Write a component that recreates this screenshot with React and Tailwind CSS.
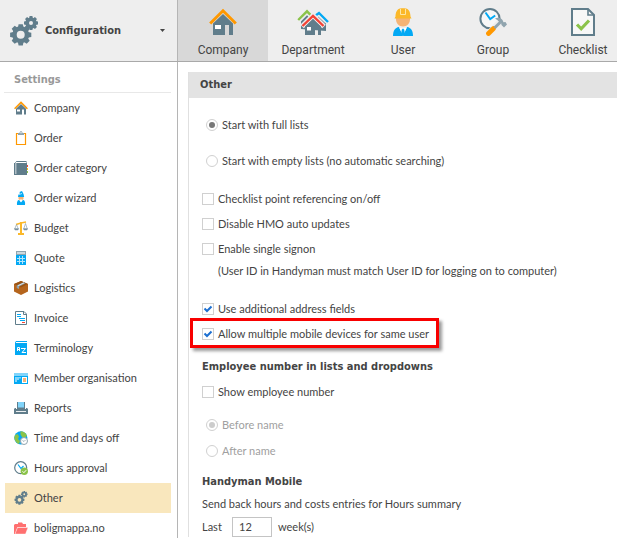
import React, { useState } from "react";

const Gear = ({ cx, cy, r, hole }) => (
  <g transform={`translate(${cx} ${cy})`}>
    {[0, 45, 90, 135, 180, 225, 270, 315].map((angle) => (
      <path
        key={angle}
        transform={`rotate(${angle})`}
        d={`M${-r * 0.28} ${-r * 0.6} L${-r * 0.2} ${-r} H${r * 0.2} L${r * 0.28} ${-r * 0.6} Z`}
        fill="#607d8b"
      />
    ))}
    <circle r={(r * 0.8 + hole) / 2} fill="none" stroke="#607d8b" strokeWidth={r * 0.8 - hole} />
  </g>
);

const GearsIcon = ({ className }) => (
  <svg viewBox="0 0 28 30" className={className} aria-hidden="true">
    <Gear cx={10.7} cy={18.8} r={10.6} hole={4} />
    <Gear cx={21} cy={7} r={7} hole={2} />
  </svg>
);

const HouseIcon = ({ className }) => (
  <svg viewBox="0 0 28 28" className={className} aria-hidden="true">
    <path d="M4 27V15.5L14 6l10 9.5V27h-4V17h-4v10z" fill="#607d8b" />
    <path d="M6 17h6v4H6z" fill="#fff" />
    <path d="M1.2 15.5 14 2.8l12.8 12.7" fill="none" stroke="#ff9800" strokeWidth="3" />
  </svg>
);

const DepartmentIcon = ({ className }) => (
  <svg viewBox="0 0 32 28" className={className} aria-hidden="true">
    <path d="M4 21v-9l6-6 6 5 6-3 7 6v9z" fill="#607d8b" />
    <path d="m1.500 13 8.500-8.700 5 5" fill="none" stroke="#eee" strokeWidth="4" />
    <path d="m16 9 5.500-3L30 14" fill="none" stroke="#eee" strokeWidth="4" />
    <path d="M1.200 12 10 3.300l4.500 4.500" fill="none" stroke="#8bc34a" strokeWidth="2.400" />
    <path d="m17.500 8.300 4.500-3.300 9 9" fill="none" stroke="#03a9f4" strokeWidth="2.400" />
    <path d="M5 18.500 16 7.500l11 11" fill="none" stroke="#eee" strokeWidth="5" />
    <path d="M8 27v-8.500l8-7.500 8 7.500V27h-3v-8h-3v8z" fill="#607d8b" />
    <path d="M10 19h4v3.500h-4z" fill="#fff" />
    <path d="M5.500 18 16 7.800 26.500 18" fill="none" stroke="#f44336" strokeWidth="2.400" />
  </svg>
);

const UserIcon = ({ className }) => (
  <svg viewBox="0 0 20 28" className={className} aria-hidden="true">
    <path d="M3 10h14c.5 5-3 8.500-7 8.500S2.500 15 3 10z" fill="#f5b375" />
    <path d="M2.500 8.500C2.500 4 4.500 1 7 .5 9 0 11 0 13 .5c2.500.5 4.500 3.500 4.500 8l1 2h-17z" fill="#fbb829" />
    <path d="M7.500 1v5.500h5V1" fill="none" stroke="#fff3c4" strokeWidth=".8" />
    <path d="M0 28c0-5 2-8.500 6-9l4 9zM20 28c0-5-2-8.500-6-9l-4 9z" fill="#03a9f4" />
    <path d="M6 19.300 10 27l4-7.700c-2 1.300-6 1.300-8 0z" fill="#fff" />
    <path d="m8.800 21.500 1.200-1 1.200 1L12 26l-2 2-2-2z" fill="#03a9f4" />
  </svg>
);

const GroupIcon = ({ className }) => (
  <svg viewBox="0 0 28 28" className={className} aria-hidden="true">
    <circle cx="11" cy="10.700" r="9.600" fill="#f7f7f7" stroke="#607d8b" strokeWidth="2" />
    <path d="m6.500 4.500 4.700 6.500 5-3.500" fill="none" stroke="#03a9f4" strokeWidth="2" />
    <path d="M10 26 21 14.500" fill="none" stroke="#eee" strokeWidth="7" />
    <path d="m9.500 25.500 5-5" fill="none" stroke="#ff9800" strokeWidth="4.800" strokeLinecap="round" />
    <path d="m15.500 20 6-6" stroke="#90a4ae" strokeWidth="3" />
    <path d="M16 10.500c3-1.500 5.500-.7 7.500 1.500l1 2.200 2-.2 1.500 2.500-3 3-2.500-2.500-.3-1.700L19 12.500z" fill="#90a4ae" />
  </svg>
);

const ChecklistIcon = ({ className }) => (
  <svg viewBox="0 0 24 28" className={className} aria-hidden="true">
    <path d="M1 1h16l6 6v20H1z" fill="#f7f7f7" stroke="#607d8b" strokeWidth="2" />
    <path d="M17 1v6h6" fill="none" stroke="#607d8b" strokeWidth="1.600" />
    <path d="m6 16.500 4.200 4.300L18 12.500" fill="none" stroke="#8bc34a" strokeWidth="3.200" />
  </svg>
);

const icon = "size-[14px] shrink-0";

const OrderIcon = () => (
  <svg viewBox="0 0 14 14" className={icon} aria-hidden="true">
    <path d="M2.500 2.500h9v11h-9z" fill="#fff" stroke="#ff9800" strokeWidth="1.200" />
    <path d="M4 4V2h1.500c0-2.400 3-2.400 3 0H10v2z" fill="#90a4ae" />
    <path d="M6.300 1.300h1.400v1H6.300z" fill="#fff" />
  </svg>
);

const BookIcon = () => (
  <svg viewBox="0 0 14 14" className={icon} aria-hidden="true">
    <path d="M1 2 2.500 0H12.500v2z" fill="#607d8b" />
    <path d="M2 1h10v1H2z" fill="#fff" />
    <path d="M0 2h13v12H0z" fill="#607d8b" />
    <path d="M1 2h1.500v11H1z" fill="#b0bec5" />
    <path d="M13 4h1v2h-1z" fill="#f44336" />
    <path d="M13 7h1v2h-1z" fill="#ffc107" />
    <path d="M13 10h1v2h-1z" fill="#8bc34a" />
  </svg>
);

const WizardIcon = () => (
  <svg viewBox="0 0 14 14" className={icon} aria-hidden="true">
    <path d="M4 6c0-2 1-3.500 2-3.500L5.500 1 8 0l1.500 3 .7 3z" fill="#03a9f4" />
    <path d="M5 3.500 8 2.500" stroke="#fff" strokeWidth=".7" />
    <path d="M4.500 6h5v1.500a2.500 2.500 0 0 1-5 0z" fill="#f5b375" />
    <path d="M3 14c-.3-3 .5-5 2-5l2 2 2-2c1.500 0 2.500 2 2 5z" fill="#03a9f4" />
    <path d="M5.300 8.500h3.400L7 11.500z" fill="#fff" />
  </svg>
);

const ScalesIcon = () => (
  <svg viewBox="0 0 14 14" className={icon} aria-hidden="true">
    <path d="M2 3.500 7 2l5-1" fill="none" stroke="#fbb829" strokeWidth="1.600" />
    <path d="M6 1h2v11H6z" fill="#fbb829" />
    <path d="M4 12h6v2H4z" fill="#fbb829" />
    <path d="M2.500 3.500.7 8h3.600zM11.500 2.500 9.700 8h3.600z" fill="none" stroke="#90a4ae" strokeWidth=".7" />
    <path d="M0 7.500h5L4 9.300H1zM9 7.500h5l-1 1.800h-3z" fill="#78909c" />
  </svg>
);

const CalculatorIcon = () => (
  <svg viewBox="0 0 14 14" className={icon} aria-hidden="true">
    <path d="M2 0h10v14H2z" fill="#03a9f4" />
    <path d="M2 0h10v4H2z" fill="#90a4ae" />
    <path d="M3 1h8v2H3z" fill="#cfd8dc" />
    <path d="M3 7.500h8M3 10.500h8M5.500 5v8M8.500 5v8" stroke="#b3e5fc" strokeWidth="1" />
  </svg>
);

const BoxIcon = () => (
  <svg viewBox="0 0 14 14" className={icon} aria-hidden="true">
    <path d="M7 0 14 3v7.500L7 14l-7-3.500V3z" fill="#b5651d" />
    <path d="M0 3 7 0l7 3-7 3.500z" fill="#9b5414" />
    <path d="M2.700 7V4.500L9.500 1.300l2 .9L5 5.500V8" fill="#90a4ae" />
    <path d="m4 4.700 6-2.800" stroke="#eceff1" strokeWidth=".8" />
  </svg>
);

const InvoiceIcon = () => (
  <svg viewBox="0 0 14 14" className={icon} aria-hidden="true">
    <path d="M1.500.5H10L12.500 3v10.500h-11z" fill="#fff" stroke="#607d8b" />
    <path d="M9.500.5v3h3" fill="none" stroke="#607d8b" />
    <path d="M3 3.500h4M3 5.500h4M5 7.500h6M6 9.500h5" stroke="#03a9f4" />
    <path d="M8 11.500h3" stroke="#f44336" />
  </svg>
);

const TerminologyIcon = () => (
  <svg viewBox="0 0 14 14" className={icon} aria-hidden="true">
    <path d="M1 1.500 2 0h11v14H1z" fill="#03a9f4" />
    <path d="M2 1h11v1H2z" fill="#fff" />
    <path d="M3.500 10V6.500h2V10M3.500 8.500h2M7 7.500h4.500L8 11.500h4" fill="none" stroke="#fff" strokeWidth="1" />
  </svg>
);

const MemberIcon = () => (
  <svg viewBox="0 0 14 14" className={icon} aria-hidden="true">
    <path d="M0 2h14v11H0z" fill="#03a9f4" />
    <path d="M0 2h14v3H0z" fill="#81d4fa" />
    <path d="M1 11V6h6v1.500H5V9H3v2z" fill="#81d4fa" />
    <path d="M8 6h5v6H8z" fill="#fff" />
    <path d="M9 7h3v4H9z" fill="#f5b375" />
  </svg>
);

const PrinterIcon = () => (
  <svg viewBox="0 0 14 14" className={icon} aria-hidden="true">
    <path d="M3 1h8v7H3z" fill="#607d8b" />
    <path d="M4 1h6v5.500H4z" fill="#81d4fa" />
    <path d="M1 7h1v1h10V7h1l1 1v5H0V8z" fill="#607d8b" />
    <path d="M2 10h10v1H2z" fill="#eceff1" />
  </svg>
);

const GlobeIcon = () => (
  <svg viewBox="0 0 14 14" className={icon} aria-hidden="true">
    <circle cx="6.800" cy="6.800" r="6.600" fill="#03a9f4" />
    <path d="M6.500.3c2.500 0 5 1 6.500 4.200L11 7 8 6 6.500 3.500zM1 4l2.500-1L5 5.500 4 8l2 2-1 3C2 12 .3 9 .3 6.500z" fill="#8bc34a" />
    <circle cx="10" cy="10" r="3.500" fill="#fff" stroke="#90a4ae" />
    <path d="M8.500 9.500 10 10.500 11.500 9" fill="none" stroke="#90a4ae" strokeWidth=".8" />
  </svg>
);

const HoursIcon = () => (
  <svg viewBox="0 0 14 14" className={icon} aria-hidden="true">
    <circle cx="6.700" cy="6.700" r="6" fill="#fff" stroke="#607d8b" strokeWidth="1.200" />
    <path d="m4 3.500 3 4L9.500 5" fill="none" stroke="#03a9f4" strokeWidth="1.200" />
    <circle cx="10.300" cy="10.300" r="3.700" fill="#8bc34a" />
    <path d="m8.500 10.300 1.400 1.400 2.300-2.500" fill="none" stroke="#fff" />
  </svg>
);

const FolderIcon = () => (
  <svg viewBox="0 0 14 14" className={icon} aria-hidden="true">
    <path d="M0 13V4l1-1h3V1.500h4L9 3h3v3H3.500L1 13z" fill="#ff7070" />
    <path d="M3.500 6.500H14L11.500 13H1z" fill="#ff7070" stroke="#fff" strokeWidth=".4" />
  </svg>
);

const menuItems = [
  { label: "Company", icon: <HouseIcon className={icon} /> },
  { label: "Order", icon: <OrderIcon /> },
  { label: "Order category", icon: <BookIcon /> },
  { label: "Order wizard", icon: <WizardIcon /> },
  { label: "Budget", icon: <ScalesIcon /> },
  { label: "Quote", icon: <CalculatorIcon /> },
  { label: "Logistics", icon: <BoxIcon /> },
  { label: "Invoice", icon: <InvoiceIcon /> },
  { label: "Terminology", icon: <TerminologyIcon /> },
  { label: "Member organisation", icon: <MemberIcon /> },
  { label: "Reports", icon: <PrinterIcon /> },
  { label: "Time and days off", icon: <GlobeIcon /> },
  { label: "Hours approval", icon: <HoursIcon /> },
  { label: "Other", icon: <GearsIcon className={icon} /> },
  { label: "boligmappa.no", icon: <FolderIcon /> },
];

const tabs = [
  { label: "Company", icon: <HouseIcon className="h-7 w-7" /> },
  { label: "Department", icon: <DepartmentIcon className="h-7 w-8" /> },
  { label: "User", icon: <UserIcon className="h-7 w-5" /> },
  { label: "Group", icon: <GroupIcon className="h-7 w-7" /> },
  { label: "Checklist", icon: <ChecklistIcon className="h-7 w-6" /> },
];

const heading = "font-['DejaVu_Sans_Condensed','Noto_Sans',sans-serif] font-bold";

const Check = ({ label, defaultChecked, highlight }) => (
  <label className="relative flex h-5 w-fit items-center gap-1">
    <span className="grid place-items-center">
      <input
        type="checkbox"
        defaultChecked={defaultChecked}
        className="peer col-start-1 row-start-1 size-3 appearance-none border border-[#d0d0d0] bg-white"
      />
      <svg viewBox="0 0 12 12" className="pointer-events-none invisible col-start-1 row-start-1 size-3 peer-checked:visible" aria-hidden="true">
        <path d="m2.500 5.500 2.500 2.500 4.500-4.500" fill="none" stroke="#1c6fd0" strokeWidth="2" />
      </svg>
    </span>
    {label}
    {highlight && (
      <span className="pointer-events-none absolute -top-1.5 -right-2.5 -bottom-1 -left-3 border-3 border-[#f80000] shadow-[3px_3px_3px_rgba(0,0,0,0.4)]" />
    )}
  </label>
);

const Radio = ({ label, name, defaultChecked, disabled }) => (
  <label className={`ml-1 flex h-5 w-fit items-center gap-1 ${disabled ? "text-[#a0a0a0]" : ""}`}>
    <span className="grid place-items-center">
      <input
        type="radio"
        name={name}
        defaultChecked={defaultChecked}
        disabled={disabled}
        className="peer col-start-1 row-start-1 size-3 appearance-none rounded-full border border-[#d0d0d0] bg-white"
      />
      <span className="pointer-events-none invisible col-start-1 row-start-1 size-1.5 rounded-full bg-[#777] peer-checked:visible peer-disabled:bg-[#ccc]" />
    </span>
    {label}
  </label>
);

const App = () => {
  const [activeTab, setActiveTab] = useState("Company");
  const [activeItem, setActiveItem] = useState("Other");

  return (
    <div className="flex h-screen flex-col overflow-hidden bg-white font-[Lato,sans-serif] text-[11px] leading-5 text-[#444]">

      {/* TOP BAR */}
      <header className="flex shrink-0 border-b border-[#a9a9a9] bg-[#eee]">
        <button className={`flex w-[178px] shrink-0 items-center gap-[7px] border-r border-[#b5b5b5] pr-3 pl-2.5 ${heading}`}>
          <GearsIcon className="h-[30px] w-7" />
          <span className="flex-1 text-left">Configuration</span>
          <svg viewBox="0 0 5 3" className="h-[3px] w-[5px]" aria-hidden="true">
            <path d="M0 0h5L2.500 3z" fill="#444" />
          </svg>
        </button>
        <nav className="flex min-w-0 flex-1 overflow-hidden">
          {tabs.map((tab) => (
            <button
              key={tab.label}
              onClick={() => setActiveTab(tab.label)}
              className={`flex w-[90px] shrink-0 flex-col items-center gap-1 pt-2 pb-px font-[Roboto,sans-serif] text-xs leading-5 ${
                activeTab === tab.label ? "bg-[#d8d8d8]" : ""
              }`}
            >
              {tab.icon}
              {tab.label}
            </button>
          ))}
        </nav>
      </header>

      <div className="flex min-h-0 flex-1">

        {/* SETTINGS MENU */}
        <aside className="w-[178px] shrink-0 overflow-hidden border-r border-[#b5b5b5] pt-2 pr-1.5 pl-1">
          <h2 className={`border-b border-[#e8e8e8] pb-0.5 pl-2.5 text-[#999] ${heading}`}>Settings</h2>
          <ul className="pl-px">
            {menuItems.map((item) => (
              <li key={item.label}>
                <button
                  onClick={() => setActiveItem(item.label)}
                  className={`flex h-[30px] w-full items-center gap-1.5 pl-[9px] text-left ${
                    activeItem === item.label ? "bg-[#f9e7bd]" : ""
                  }`}
                >
                  {item.icon}
                  {item.label}
                </button>
              </li>
            ))}
          </ul>
        </aside>

        {/* OPTIONS */}
        <main className="min-w-0 flex-1 overflow-hidden pt-2.5 pl-2.5">
          <section className="border-l border-[#e0e0e0]">
            <h1 className={`bg-[#e3e3e3] py-[3px] pl-[11px] ${heading}`}>Other</h1>
            <form className="pt-[17px] pl-[13px]">
              <div className="flex flex-col gap-4">
                <Radio name="start" label="Start with full lists" defaultChecked />
                <Radio name="start" label="Start with empty lists (no automatic searching)" />
              </div>

              <div className="mt-[18px] flex flex-col gap-[5px]">
                <Check label="Checklist point referencing on/off" />
                <Check label="Disable HMO auto updates" />
                <Check label="Enable single signon" />
              </div>
              <p className="mt-0.5 pl-4">(User ID in Handyman must match User ID for logging on to computer)</p>

              <div className="mt-[18px] flex flex-col gap-[5px]">
                <Check label="Use additional address fields" defaultChecked />
                <Check label="Allow multiple mobile devices for same user" defaultChecked highlight />
              </div>

              <h2 className={`mt-[13px] mb-[5px] ${heading}`}>Employee number in lists and dropdowns</h2>
              <Check label="Show employee number" />
              <div className="mt-[13px] flex flex-col gap-1.5">
                <Radio name="position" label="Before name" defaultChecked disabled />
                <Radio name="position" label="After name" disabled />
              </div>

              <h2 className={`mt-[11px] mb-0.5 ${heading}`}>Handyman Mobile</h2>
              <p>Send back hours and costs entries for Hours summary</p>
              <div className="mt-[3px] flex items-center">
                <label htmlFor="weeks" className="w-[30px]">Last</label>
                <input
                  id="weeks"
                  type="text"
                  defaultValue="12"
                  className="mr-1.5 h-5 w-10 border border-[#c4c4c4] bg-white px-1.5"
                />
                week(s)
              </div>
            </form>
          </section>
        </main>

      </div>
    </div>
  );
};

export default App;
